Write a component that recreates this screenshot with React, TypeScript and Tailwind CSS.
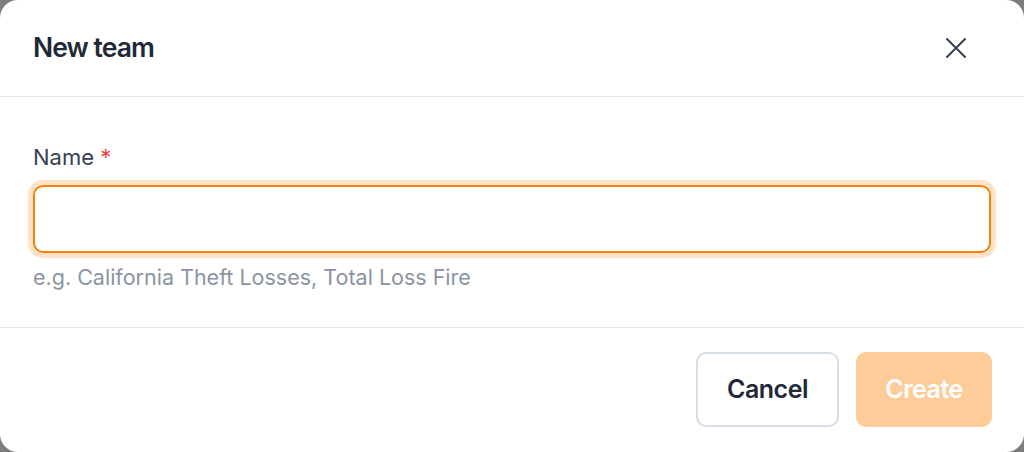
export default function App() {
  return (
    <div className="h-[452px] w-[1024px] bg-[#7d7d7d]" style={{ fontFamily: "Inter, 'Noto Sans', sans-serif" }}>
      <div className="flex h-full w-full flex-col rounded-[18px] bg-white">
        {/* header */}
        <div className="flex h-[97px] items-center justify-between border-b border-[#e5e7eb] pl-[33px] pr-[50px]">
          <h2 className="text-[26.5px] font-semibold tracking-[-0.035em] text-[#1f2937]">New team</h2>
          <button className="flex h-[36px] w-[36px] items-center justify-center text-[#374151]">
            <svg width="20" height="20" viewBox="0 0 20 20" fill="none" stroke="currentColor" strokeWidth="2" strokeLinecap="round">
              <path d="M1 1L19 19M19 1L1 19" />
            </svg>
          </button>
        </div>

        {/* body */}
        <div className="flex flex-col border-b border-[#e5e7eb] px-[33px] pt-[45px] pb-[36px]">
          <label className="text-[22px] leading-[30px] font-normal text-[#374151]">
            Name <span className="text-[#ef4444]">*</span>
          </label>
          <input
            className="mt-[13px] h-[68px] w-full rounded-[10px] border-2 border-[#fb7f06] px-4 text-[22px] shadow-[0_0_0_5px_#fee3c8] outline-none"
          />
          <p className="mt-[10px] text-[21.5px] leading-[28px] text-[#8a94a3]">
            e.g. California Theft Losses, Total Loss Fire
          </p>
        </div>

        {/* footer */}
        <div className="flex justify-end gap-[17px] pt-[24px] pr-[32px]">
          <button className="h-[75px] w-[143px] rounded-[10px] border-2 border-[#d7dde5] text-[25px] font-semibold tracking-[-0.02em] text-[#1f2937]">
            Cancel
          </button>
          <button className="h-[75px] w-[136px] rounded-[10px] bg-[#fecc99] text-[25px] font-semibold tracking-[-0.02em] text-white">
            Create
          </button>
        </div>
      </div>
    </div>
  );
}
